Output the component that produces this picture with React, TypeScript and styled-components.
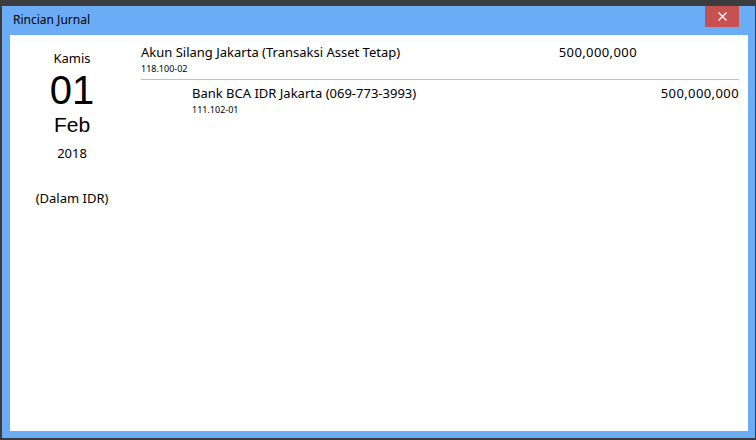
import React from "react";
import styled, { createGlobalStyle } from "styled-components";

const Global = createGlobalStyle`
  html, body { margin: 0; padding: 0; background: #3d3d3d; }
  body { width: 756px; height: 440px; overflow: hidden; font-family: "Noto Sans", "Open Sans", sans-serif; }
  #root { width: 756px; height: 440px; }
`;

const Desktop = styled.div`
  width: 756px;
  height: 440px;
  box-sizing: border-box;
  padding: 6px 1px 2px 2px;
  background: #3b3c3e;
  display: flex;
`;

const Window = styled.div`
  flex: 1;
  display: flex;
  flex-direction: column;
  background: #6aadf6;
  padding: 0 7px 7px 8px;
`;

const TitleBar = styled.div`
  height: 29px;
  display: flex;
  align-items: flex-start;
  justify-content: space-between;
`;

const Title = styled.div`
  font-family: "Noto Sans", sans-serif;
  font-size: 12px;
  color: #000;
  padding: 6px 0 0 3px;
  line-height: 16px;
`;

const CloseButton = styled.div`
  width: 34px;
  height: 21px;
  margin-right: 9px;
  background: #c75050;
  display: flex;
  align-items: center;
  justify-content: center;
`;

const Content = styled.div`
  flex: 1;
  background: #fff;
  display: flex;
  padding: 9px 9px 0 0;
`;

const DateColumn = styled.div`
  width: 124px;
  margin-top: -9px;
  display: flex;
  flex-direction: column;
  align-items: center;
  color: #000;
`;

const DateText = styled.div<{ $size: number; $lh: number; $mt?: number; $alt?: boolean }>`
  font-family: ${(p) => (p.$alt ? '"Liberation Sans", Arial, sans-serif' : '"Noto Sans", sans-serif')};
  font-size: ${(p) => p.$size}px;
  line-height: ${(p) => p.$lh}px;
  margin-top: ${(p) => p.$mt ?? 0}px;
`;

const Entries = styled.div`
  flex: 1;
  margin-left: 7px;
  display: flex;
  flex-direction: column;
`;

const EntryRow = styled.div<{ $indent: number; $divider?: boolean }>`
  display: grid;
  grid-template-columns: 1fr 102px 102px;
  padding-left: ${(p) => p.$indent}px;
  padding-bottom: 5px;
  border-bottom: ${(p) => (p.$divider ? "1px solid #c0c0c0" : "none")};
  margin-bottom: ${(p) => (p.$divider ? "5px" : "0")};
`;

const AccountCell = styled.div`
  display: flex;
  flex-direction: column;
`;

const AccountName = styled.div`
  font-size: 13px;
  line-height: 17px;
  color: #000;
`;

const AccountCode = styled.div`
  font-size: 9px;
  line-height: 11px;
  margin-top: 2px;
  color: #000;
`;

const Amount = styled.div`
  font-size: 13px;
  line-height: 17px;
  letter-spacing: 0.4px;
  text-align: right;
  color: #000;
`;

const entries = [
  { name: "Akun Silang Jakarta (Transaksi Asset Tetap)", code: "118.100-02", debit: "500,000,000", credit: "", indent: 0 },
  { name: "Bank BCA IDR Jakarta (069-773-3993)", code: "111.102-01", debit: "", credit: "500,000,000", indent: 51 },
];

export default function App() {
  return (
    <>
      <Global />
      <Desktop>
        <Window>
          <TitleBar>
            <Title>Rincian Jurnal</Title>
            <CloseButton>
              <svg width="9" height="9" viewBox="0 0 9 9">
                <path d="M0.5 0.5L8.5 8.5M8.5 0.5L0.5 8.5" stroke="#fff" strokeWidth="1.3" />
              </svg>
            </CloseButton>
          </TitleBar>
          <Content>
            <DateColumn>
              <DateText $size={13} $lh={16} $mt={15}>Kamis</DateText>
              <DateText $size={40} $lh={46} $mt={1} $alt>01</DateText>
              <DateText $size={21} $lh={24} $alt>Feb</DateText>
              <DateText $size={13} $lh={16} $mt={8}>2018</DateText>
              <DateText $size={13} $lh={16} $mt={29}>(Dalam IDR)</DateText>
            </DateColumn>
            <Entries>
              {entries.map((e, i) => (
                <EntryRow key={i} $indent={e.indent} $divider={i === 0}>
                  <AccountCell>
                    <AccountName>{e.name}</AccountName>
                    <AccountCode>{e.code}</AccountCode>
                  </AccountCell>
                  <Amount>{e.debit}</Amount>
                  <Amount>{e.credit}</Amount>
                </EntryRow>
              ))}
            </Entries>
          </Content>
        </Window>
      </Desktop>
    </>
  );
}
